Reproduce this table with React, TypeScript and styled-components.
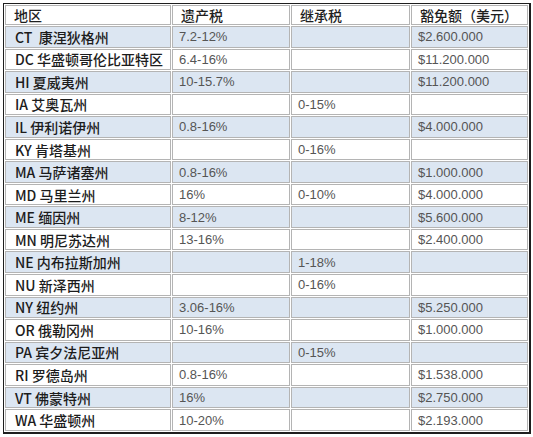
import React from 'react';
import styled, { createGlobalStyle } from 'styled-components';

type Row = { region: string; estate: string; inherit: string; exempt: string };

const rows: Row[] = [
  { region: 'CT  康涅狄格州', estate: '7.2-12%', inherit: '', exempt: '$2.600.000' },
  { region: 'DC 华盛顿哥伦比亚特区', estate: '6.4-16%', inherit: '', exempt: '$11.200.000' },
  { region: 'HI 夏威夷州', estate: '10-15.7%', inherit: '', exempt: '$11.200.000' },
  { region: 'IA 艾奥瓦州', estate: '', inherit: '0-15%', exempt: '' },
  { region: 'IL 伊利诺伊州', estate: '0.8-16%', inherit: '', exempt: '$4.000.000' },
  { region: 'KY 肯塔基州', estate: '', inherit: '0-16%', exempt: '' },
  { region: 'MA 马萨诸塞州', estate: '0.8-16%', inherit: '', exempt: '$1.000.000' },
  { region: 'MD 马里兰州', estate: '16%', inherit: '0-10%', exempt: '$4.000.000' },
  { region: 'ME 缅因州', estate: '8-12%', inherit: '', exempt: '$5.600.000' },
  { region: 'MN 明尼苏达州', estate: '13-16%', inherit: '', exempt: '$2.400.000' },
  { region: 'NE 内布拉斯加州', estate: '', inherit: '1-18%', exempt: '' },
  { region: 'NU 新泽西州', estate: '', inherit: '0-16%', exempt: '' },
  { region: 'NY 纽约州', estate: '3.06-16%', inherit: '', exempt: '$5.250.000' },
  { region: 'OR 俄勒冈州', estate: '10-16%', inherit: '', exempt: '$1.000.000' },
  { region: 'PA 宾夕法尼亚州', estate: '', inherit: '0-15%', exempt: '' },
  { region: 'RI 罗德岛州', estate: '0.8-16%', inherit: '', exempt: '$1.538.000' },
  { region: 'VT 佛蒙特州', estate: '16%', inherit: '', exempt: '$2.750.000' },
  { region: 'WA 华盛顿州', estate: '10-20%', inherit: '', exempt: '$2.193.000' },
];

const GlobalStyle = createGlobalStyle`
  html, body {
    margin: 0;
    padding: 0;
    background: #ffffff;
  }
`;

const App: React.FC = () => {
  return (
    <Page>
      <GlobalStyle />
      <Table>
        <colgroup>
          <col style={{ width: 166 }} />
          <col style={{ width: 118 }} />
          <col style={{ width: 119 }} />
          <col />
        </colgroup>
        <thead>
          <tr>
            <HeadCell>地区</HeadCell>
            <HeadCell>遗产税</HeadCell>
            <HeadCell>继承税</HeadCell>
            <HeadCell>豁免额（美元）</HeadCell>
          </tr>
        </thead>
        <tbody>
          {rows.map((r, i) => (
            <BodyRow key={r.region} $striped={i % 2 === 0}>
              <RegionCell>{r.region}</RegionCell>
              <ValueCell>{r.estate}</ValueCell>
              <ValueCell>{r.inherit}</ValueCell>
              <ValueCell>{r.exempt}</ValueCell>
            </BodyRow>
          ))}
        </tbody>
      </Table>
    </Page>
  );
};

export default App;

const Page = styled.div`
  width: 533px;
  height: 437px;
  padding: 3px 0 0 3px;
  box-sizing: border-box;
  background: #ffffff;
  overflow: hidden;
`;

const Table = styled.table`
  width: 528px;
  height: 431px;
  box-sizing: border-box;
  table-layout: fixed;
  border-collapse: separate;
  border-spacing: 1px;
  border: 1px solid #1e1e1e;
  border-right-width: 2px;
  border-bottom-width: 2px;
  background: #ffffff;
  font-family: 'Noto Sans CJK SC', sans-serif;
`;

const HeadCell = styled.th`
  height: 18px;
  padding: 0 0 0 8px;
  border: 1px solid #b4b4b4;
  text-align: left;
  font-family: 'Noto Sans CJK SC', sans-serif;
  font-size: 14px;
  font-weight: 500;
  color: #1f1f1f;
  white-space: nowrap;
  line-height: 1;
`;

const BodyRow = styled.tr<{ $striped: boolean }>`
  td {
    background: ${(p) => (p.$striped ? '#dce6f2' : '#ffffff')};
  }
`;

const RegionCell = styled.td`
  height: 18px;
  padding: 0 0 0 9px;
  border: 1px solid #b4b4b4;
  font-family: 'Noto Sans CJK SC', sans-serif;
  font-size: 14px;
  font-weight: 500;
  color: #1c1c1c;
  white-space: pre;
  line-height: 1;
`;

const ValueCell = styled.td`
  height: 18px;
  padding: 0 0 0 6px;
  border: 1px solid #b4b4b4;
  font-family: 'Liberation Sans', sans-serif;
  font-size: 13px;
  color: #555555;
  white-space: nowrap;
  line-height: 1;
`;
